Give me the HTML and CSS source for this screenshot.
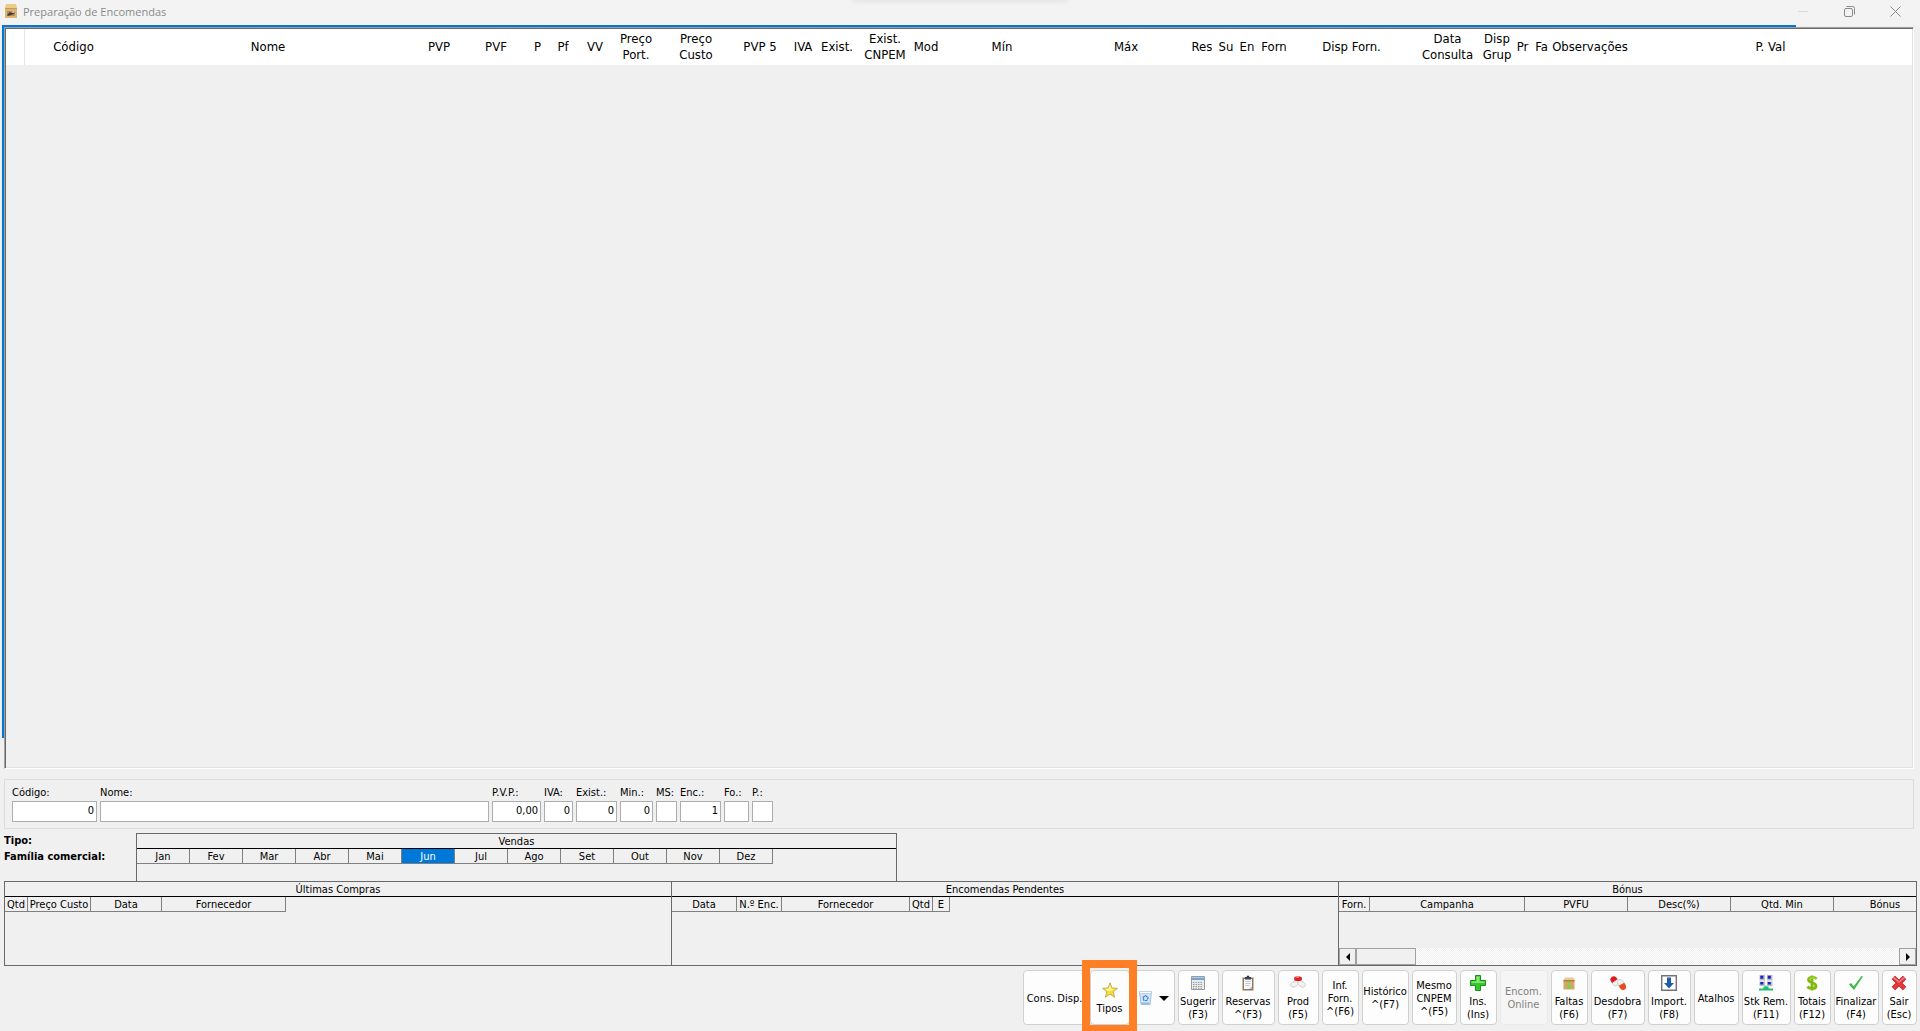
FILE: index.html
```
<!DOCTYPE html>
<html lang="pt">
<head>
<meta charset="utf-8">
<title>Preparação de Encomendas</title>
<link rel="stylesheet" href="styles.css">
</head>
<body>
<header class="titlebar">
  <svg class="app-icon" width="14" height="16" viewBox="0 0 14 16"><path d="M1 4h12v11H1z" fill="#dcb670"/><path d="M2 1h10l1 4H1z" fill="#eacb8c"/><path d="M1 5h12v1H1z" fill="#c69c55"/><path d="M3 8h8v5H3z" fill="#b98f58"/><path d="M3 12l3-3 2 1 3-2-1 3-3 1-3 1z" fill="#443a3d"/><path d="M8 9l2-1 1 1-2 1z" fill="#d8e6f2"/></svg>
  <h1 class="title">Preparação de Encomendas</h1>
  <div class="window-controls">
    <button class="win-btn" aria-label="Minimizar" disabled><svg width="10" height="10" viewBox="0 0 10 10"><path d="M0 5.500h10" stroke="#d9d9d9"/></svg></button>
    <button class="win-btn" aria-label="Restaurar"><svg width="11" height="11" viewBox="0 0 11 11" fill="none" stroke="#8a8a8a"><rect x=".5" y="2.500" width="8" height="8" rx="1.500"/><path d="M2.500 .5h6a2 2 0 0 1 2 2v6"/></svg></button>
    <button class="win-btn" aria-label="Fechar"><svg width="11" height="11" viewBox="0 0 11 11"><path d="M.5.5l10 10M10.500.5l-10 10" stroke="#8a8a8a"/></svg></button>
  </div>
</header>

<main class="window">
  <section class="orders">
    <table class="orders-table">
      <colgroup>
        <col class="w19"><col class="w97"><col class="w292"><col class="w50"><col class="w64"><col class="w19"><col class="w32"><col class="w32"><col class="w50"><col class="w70"><col class="w58"><col class="w28"><col class="w40"><col class="w56"><col class="w26"><col class="w126"><col class="w122"><col class="w30"><col class="w18"><col class="w24"><col class="w30"><col class="w125"><col class="w67"><col class="w32"><col class="w19"><col class="w19"><col class="w78"><col>
      </colgroup>
      <thead>
        <tr><th></th><th>Código</th><th>Nome</th><th>PVP</th><th>PVF</th><th>P</th><th>Pf</th><th>VV</th><th>Preço<br>Port.</th><th>Preço<br>Custo</th><th>PVP 5</th><th>IVA</th><th>Exist.</th><th>Exist.<br>CNPEM</th><th>Mod</th><th>Mín</th><th>Máx</th><th>Res</th><th>Su</th><th>En</th><th>Forn</th><th>Disp Forn.</th><th>Data<br>Consulta</th><th>Disp<br>Grup</th><th>Pr</th><th>Fa</th><th>Observações</th><th>P. Val</th></tr>
      </thead>
    </table>
  </section>

  <form class="product">
    <label class="field f-code">Código:<input type="text" value="0"></label>
    <label class="field f-name">Nome:<input type="text"></label>
    <label class="field f-pvp">P.V.P.:<input type="text" value="0,00"></label>
    <label class="field f-iva">IVA:<input type="text" value="0"></label>
    <label class="field f-stock">Exist.:<input type="text" value="0"></label>
    <label class="field f-min">Min.:<input type="text" value="0"></label>
    <label class="field f-small">MS:<input type="text"></label>
    <label class="field f-stock">Enc.:<input type="text" value="1"></label>
    <label class="field f-fo">Fo.:<input type="text"></label>
    <label class="field f-small">P.:<input type="text"></label>
  </form>

  <section class="summary">
    <div class="kind"><div>Tipo:</div><div>Família comercial:</div></div>
    <div class="sales">
      <h2 class="panel-title">Vendas</h2>
      <table class="grid months"><thead><tr><th>Jan</th><th>Fev</th><th>Mar</th><th>Abr</th><th>Mai</th><th class="current">Jun</th><th>Jul</th><th>Ago</th><th>Set</th><th>Out</th><th>Nov</th><th>Dez</th></tr></thead></table>
    </div>
  </section>

  <section class="panels">
    <div class="panel">
      <h2 class="panel-title">Últimas Compras</h2>
      <table class="grid purchases"><colgroup><col class="w23"><col class="w63"><col class="w71"><col class="w124"></colgroup><thead><tr><th>Qtd</th><th>Preço Custo</th><th>Data</th><th>Fornecedor</th></tr></thead></table>
    </div>
    <div class="panel">
      <h2 class="panel-title">Encomendas Pendentes</h2>
      <table class="grid pending"><colgroup><col class="w65"><col class="w45"><col class="w128"><col class="w23"><col class="w17"></colgroup><thead><tr><th>Data</th><th>N.º Enc.</th><th>Fornecedor</th><th>Qtd</th><th>E</th></tr></thead></table>
    </div>
    <div class="panel">
      <h2 class="panel-title">Bónus</h2>
      <table class="grid bonus"><colgroup><col class="w31"><col class="w155"><col class="w103"><col class="w103"><col class="w103"><col class="w103"></colgroup><thead><tr><th>Forn.</th><th>Campanha</th><th>PVFU</th><th>Desc(%)</th><th>Qtd. Min</th><th>Bónus</th></tr></thead></table>
      <div class="scrollbar">
        <button class="scroll-btn" aria-label="Deslocar para a esquerda"><svg width="4" height="8" viewBox="0 0 4 8"><path d="M4 0v8L0 4z"/></svg></button>
        <div class="thumb"></div>
        <button class="scroll-btn scroll-end" aria-label="Deslocar para a direita"><svg width="4" height="8" viewBox="0 0 4 8"><path d="M0 0v8l4-4z"/></svg></button>
      </div>
    </div>
  </section>

  <nav class="toolbar">
    <button class="tool b64">Cons. Disp.</button>
    <button class="tool b40 highlighted"><svg width="16" height="16" viewBox="0 0 16 16"><path d="M8 .8l2 5.200 5.500.3-4.300 3.500 1.500 5.400L8 12.200l-4.700 3 1.500-5.400L.5 6.300 6 6z" fill="#f4dd3a" stroke="#b9a24a" stroke-width=".8"/><path d="M8 3l1.200 3.800 3.500.2L8 9 5 8.500 3.500 7l3-.2z" fill="#fff79a"/></svg><span>Tipos</span></button>
    <button class="tool b42 split" aria-label="Eliminar"><svg width="13" height="14" viewBox="0 0 13 14"><path d="M.5 1h12l-1.500 12.500h-9z" fill="#d3e6f8" stroke="#8fb5dc" stroke-width=".8"/><path d="M.5.500h12v2H.5z" fill="#fff" stroke="#a5bdd5" stroke-width=".6"/><path d="M6.500 4.500L9 6.500 8 9.500H5L4 6.500z" fill="none" stroke="#2c7edb" stroke-width="1.200" stroke-dasharray="2.400 .7"/><path d="M2.500 11.500h8v2h-8z" fill="#8fbbe8"/></svg><svg width="10" height="5" viewBox="0 0 10 5"><path d="M0 0h10L5 5z"/></svg></button>
    <button class="tool b41"><svg width="16" height="16" viewBox="0 0 16 16"><path d="M1.500 1.500h13v13h-13z" fill="#e9ebed" stroke="#969ba0"/><path d="M2 2h12v3H2z" fill="#74a4d5"/><path d="M2 2h12v1H2z" fill="#b5cde4"/><g stroke="#969ca3" stroke-dasharray="1.500 1"><path d="M3 7.500h10M3 9.500h10M3 11.500h10M3 13.300h10"/></g></svg><span>Sugerir<br>(F3)</span></button>
    <button class="tool b53"><svg width="16" height="16" viewBox="0 0 16 16"><path d="M2.500 2.500h11v13h-11z" fill="#8d7a66"/><path d="M4 4h8v10H4z" fill="#f5f7fa"/><path d="M9 14l3-3v3z" fill="#c2c7cf"/><path d="M5 2h1.500a1.500 1.500 0 0 1 3 0H11v2.500H5z" fill="#3c4349"/><path d="M5.500 6.500h5m-5 2h5m-5 2h4" stroke="#b2bac4" stroke-width=".8"/></svg><span>Reservas<br>^(F3)</span></button>
    <button class="tool b41"><svg width="16" height="16" viewBox="0 0 16 16"><g stroke="#c4c4c4" stroke-width=".7" fill="#f3f3f3"><rect x=".5" y="6.500" width="8" height="5" rx="2.500" transform="rotate(-28 4.500 9)"/><rect x="7.500" y="6.500" width="8" height="5" rx="2.500" transform="rotate(30 11.500 9)"/></g><rect x="4" y="1.500" width="8" height="4.500" rx="2.200" fill="#e51c1c"/><path d="M5.500 3c1-.8 2-.8 3.500-.5" stroke="#ff8b83" fill="none"/></svg><span>Prod<br>(F5)</span></button>
    <button class="tool b37">Inf.<br>Forn.<br>^(F6)</button>
    <button class="tool b47">Histórico<br>^(F7)</button>
    <button class="tool b45">Mesmo<br>CNPEM<br>^(F5)</button>
    <button class="tool b37"><svg width="16" height="16" viewBox="0 0 16 16"><path d="M5.500.5h5v5h5v5h-5v5h-5v-5h-5v-5h5z" fill="#37c72d" stroke="#13911a"/><path d="M6.500 1.500h3v5h5v1.500h-13V6.500h5z" fill="#8be779"/></svg><span>Ins.<br>(Ins)</span></button>
    <button class="tool b48" disabled>Encom.<br>Online</button>
    <button class="tool b37"><svg width="16" height="16" viewBox="0 0 16 16"><path d="M2.500 5h11v9.500h-11z" fill="#d2a866"/><path d="M4 2.500h9l.5 3h-11z" fill="#e9cb90"/><path d="M2.500 5h11v1.500h-11z" fill="#a98145"/><path d="M8 7.500v5M5.800 10.500L8 13l2.200-2.500" stroke="#7fd248" stroke-width="1.500" fill="none"/></svg><span>Faltas<br>(F6)</span></button>
    <button class="tool b54"><svg width="16" height="16" viewBox="0 0 16 16"><g transform="rotate(-35 5 6)"><rect x="1.500" y="1" width="6.500" height="10" rx="3.200" fill="#f0f0f0" stroke="#c4c4c4" stroke-width=".6"/><path d="M1.500 6V4.200a3.200 3.200 0 0 1 6.500 0V6z" fill="#df1b1e"/></g><g transform="rotate(-30 12 10)"><rect x="8.800" y="4" width="6.200" height="11" rx="3" fill="#f0f0f0" stroke="#c4c4c4" stroke-width=".6"/><path d="M8.800 9h6.200v3a3 3 0 0 1-6.200 0z" fill="#e64c20"/></g></svg><span>Desdobra<br>(F7)</span></button>
    <button class="tool b43"><svg width="16" height="16" viewBox="0 0 16 16"><path d="M.7.700h14.600v14.600H.7z" fill="#fff" stroke="#707478" stroke-width="1.400"/><path d="M6 2.500h4V8h3l-5 5.500L3 8h3z" fill="#205da5"/></svg><span>Import.<br>(F8)</span></button>
    <button class="tool b45">Atalhos</button>
    <button class="tool b49"><svg width="16" height="16" viewBox="0 0 16 16"><g fill="#b9bdc8"><path d="M1.500 0h5.500v5.500H1.500zM9 0h5.500v5.500H9zM1.500 6.500H7V11H1.500zM9 6.500h5.500V11H9z"/></g><g fill="#1b22bb"><path d="M2.300.8h3v3h-3zM9.800.8h3v3h-3zM2.300 7h3v2.500h-3zM9.800 7h3v2.500h-3z"/></g><path d="M7.500 10.500h1v1h2v2H15v2H1v-2h4.500v-2h2z" fill="#1dbd72"/></svg><span>Stk Rem.<br>(F11)</span></button>
    <button class="tool b37"><svg width="16" height="16" viewBox="0 0 16 16"><path d="M12.500 4C11 2 5 1.500 4.500 4.700 4 8 12 7 12 11c0 3.500-7 3-8.500.5M8 .5v15" fill="none" stroke="#82b812" stroke-width="2.800"/><path d="M11.500 3.500C10 2.500 6 2.500 5.500 4.500" fill="none" stroke="#c9ea50"/></svg><span>Totais<br>(F12)</span></button>
    <button class="tool b45"><svg width="16" height="16" viewBox="0 0 16 16"><path d="M1 9.500L3 8l2.800 3.200L13.500 1l1.500.5L6 15z" fill="#3eb94a"/></svg><span>Finalizar<br>(F4)</span></button>
    <button class="tool b35"><svg width="16" height="16" viewBox="0 0 16 16"><path d="M2.500 2.500l11 11m0-11l-11 11" stroke="#b9191e" stroke-width="4.600"/><path d="M2.500 2.500l11 11m0-11l-11 11" stroke="#e8393b" stroke-width="3.200"/><path d="M2 2l6 5 6-5" fill="none" stroke="#f28d89" stroke-width="1.200"/></svg><span>Sair<br>(Esc)</span></button>
  </nav>
</main>
</body>
</html>
```
FILE: styles.css
```
* { box-sizing: border-box; }

body {
  margin: 0;
  min-height: 100vh;
  display: flex;
  flex-direction: column;
  background: #f0f0f0;
  color: #000;
  font: 11px/13px Tahoma, "DejaVu Sans Condensed", "DejaVu Sans", sans-serif;
}

button, input { font: inherit; color: inherit; }
svg { display: block; flex: none; }
h1, h2 { margin: 0; font-weight: normal; }

/* Title bar */
.titlebar {
  position: relative;
  display: flex;
  align-items: center;
  height: 25px;
  padding: 0 2px 3px 4px;
  background: #f3f3f3;
}
.titlebar::before {
  content: "";
  position: absolute;
  top: -4px;
  left: 50%;
  width: 216px;
  height: 4px;
  margin-left: -108px;
  box-shadow: 0 0 6px #0002;
}
.title {
  margin-left: 5px;
  padding-top: 2px;
  font: 11px/16px "Open Sans", sans-serif;
  color: #8a8a8a;
}
.window-controls { display: flex; margin-left: auto; }
.win-btn {
  display: flex;
  align-items: center;
  justify-content: center;
  width: 46px;
  height: 20px;
  padding: 0;
  border: 0;
  background: none;
}

.window {
  flex: 1;
  display: flex;
  flex-direction: column;
  padding: 2px 3px 6px 4px;
}

/* Orders grid */
.orders {
  position: relative;
  flex: 1;
  margin-right: 3px;
  border: 1px solid;
  border-color: #a0a0a0 #fff #fff #a0a0a0;
  box-shadow: inset 1px 1px #696969, inset -1px -1px #e3e3e3;
  padding: 1px;
}
.orders::before, .orders::after {
  content: "";
  position: absolute;
  top: -3px;
  left: -3px;
  background: #0078d7;
}
.orders::before { right: 117px; height: 2px; }
.orders::after { bottom: 30px; width: 2px; }
.orders-table {
  width: 100%;
  table-layout: fixed;
  border-collapse: separate;
  border-spacing: 0;
  background: #fff;
}
.orders-table th {
  height: 36px;
  padding: 0;
  font: 13px/16px Tahoma, "DejaVu Sans Condensed", "DejaVu Sans", sans-serif;
  white-space: nowrap;
}
.orders-table th:first-child { border-right: 1px solid #e5e5e5; }

.w17 { width: 17px; } .w18 { width: 18px; } .w19 { width: 19px; }
.w23 { width: 23px; } .w24 { width: 24px; } .w26 { width: 26px; }
.w28 { width: 28px; } .w30 { width: 30px; } .w31 { width: 31px; }
.w32 { width: 32px; } .w40 { width: 40px; } .w45 { width: 45px; }
.w50 { width: 50px; } .w56 { width: 56px; } .w58 { width: 58px; }
.w63 { width: 63px; } .w64 { width: 64px; } .w65 { width: 65px; }
.w67 { width: 67px; } .w70 { width: 70px; } .w71 { width: 71px; }
.w78 { width: 78px; } .w97 { width: 97px; } .w103 { width: 103px; }
.w122 { width: 122px; } .w124 { width: 124px; } .w125 { width: 125px; }
.w126 { width: 126px; } .w128 { width: 128px; } .w155 { width: 155px; }
.w292 { width: 292px; }

/* Product fields */
.product {
  display: flex;
  gap: 3px;
  height: 50px;
  margin: 10px 3px 0 0;
  padding: 6px 7px;
  border: 1px solid #dcdcdc;
}
.field {
  display: flex;
  flex-direction: column;
  gap: 2px;
  white-space: nowrap;
}
.field input {
  width: 100%;
  height: 21px;
  padding: 0 2px 2px;
  border: 1px solid #abadb3;
  background: #fff;
  text-align: right;
}
.f-code { width: 85px; }
.f-name { width: 389px; }
.f-pvp { width: 49px; }
.f-iva { width: 29px; }
.f-stock { width: 41px; }
.f-min { width: 33px; }
.f-small { width: 21px; }
.f-fo { width: 25px; }

/* Product family and monthly sales */
.summary { display: flex; margin-top: 4px; }
.kind {
  width: 132px;
  font-weight: bold;
  line-height: 16px;
}
.sales {
  flex: 0 1 761px;
  height: 48px;
  border: 1px solid #696969;
  border-bottom: 0;
}
.panel-title {
  height: 15px;
  border-bottom: 1px solid #000;
  font-size: 11px;
  line-height: 15px;
  text-align: center;
}
.grid {
  table-layout: fixed;
  border-collapse: separate;
  border-spacing: 0;
}
.grid th {
  height: 15px;
  padding: 1px 0 0;
  border-right: 1px solid #808080;
  border-bottom: 1px solid #808080;
  font-weight: normal;
  line-height: 13px;
  white-space: nowrap;
}
.grid .current { background: #0078d7; color: #fff; }
.months { width: 636px; }
.purchases { width: 281px; }
.pending { width: 278px; }
.bonus { width: 598px; }

/* Detail panels */
.panels {
  display: grid;
  grid-template-columns: 667fr 667fr 578fr;
  height: 85px;
  border: 1px solid #696969;
  border-left: 0;
}
.panel {
  display: flex;
  flex-direction: column;
  min-width: 0;
  overflow: hidden;
  border-left: 1px solid #696969;
}
.panel-title, .grid { flex: none; }
.scrollbar {
  display: flex;
  height: 17px;
  margin-top: auto;
  background: conic-gradient(#fff 25%, #f0f0f0 0 50%, #fff 0 75%, #f0f0f0 0) 0 0 / 2px 2px;
}
.scroll-btn, .thumb {
  border: 1px solid #a0a0a0;
  background: #f0f0f0;
}
.scroll-btn {
  display: flex;
  align-items: center;
  justify-content: center;
  width: 17px;
  padding: 0;
}
.scroll-end { margin-left: auto; }
.thumb { width: 60px; }

/* Toolbar */
.toolbar {
  display: flex;
  justify-content: flex-end;
  gap: 3px;
  margin-top: 4px;
}
.tool {
  position: relative;
  display: flex;
  flex-direction: column;
  align-items: center;
  justify-content: center;
  gap: 4px;
  height: 55px;
  padding: 1px 1px 0 0;
  border: 1px solid #d0d0d0;
  border-radius: 4px;
  background: #fdfdfd;
  white-space: nowrap;
}
.tool:disabled {
  border-color: #eaeaea;
  background: #f5f5f5;
  color: #838383;
}
.split { flex-direction: row; gap: 7px; }
.highlighted::after {
  content: "";
  position: absolute;
  inset: -11px -8px -7px -9px;
  border: 8px solid #ff7f27;
  border-bottom-width: 6px;
  z-index: 1;
}
.b35 { width: 35px; } .b37 { width: 37px; } .b40 { width: 40px; }
.b41 { width: 41px; } .b42 { width: 42px; } .b43 { width: 43px; }
.b45 { width: 45px; } .b47 { width: 47px; } .b48 { width: 48px; }
.b49 { width: 49px; } .b53 { width: 53px; } .b54 { width: 54px; }
.b64 { width: 64px; }
```
